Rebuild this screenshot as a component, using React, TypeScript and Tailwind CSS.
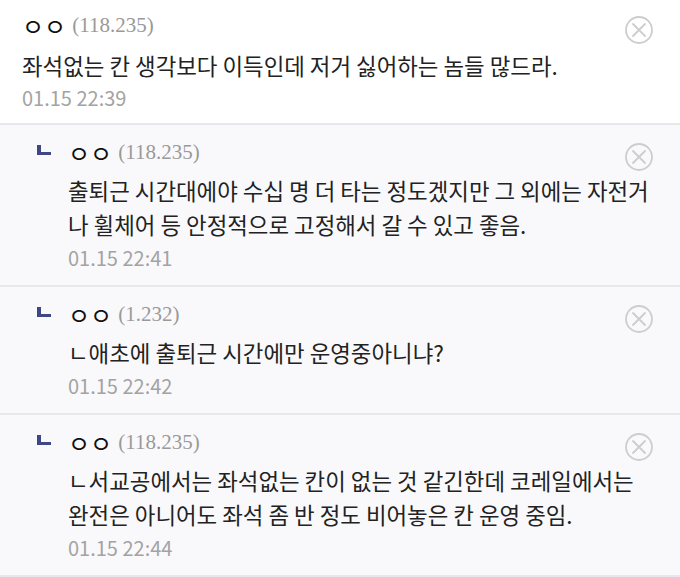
import React from "react"

type Comment = {
  ip: string
  lines: string
  time: string
  reply?: boolean
}

const comments: Comment[] = [
  {
    ip: "(118.235)",
    lines: "좌석없는 칸 생각보다 이득인데 저거 싫어하는 놈들 많드라.",
    time: "01.15 22:39",
  },
  {
    ip: "(118.235)",
    lines: "출퇴근 시간대에야 수십 명 더 타는 정도겠지만 그 외에는 자전거나 휠체어 등 안정적으로 고정해서 갈 수 있고 좋음.",
    time: "01.15 22:41",
    reply: true,
  },
  {
    ip: "(1.232)",
    lines: "ㄴ애초에 출퇴근 시간에만 운영중아니냐?",
    time: "01.15 22:42",
    reply: true,
  },
  {
    ip: "(118.235)",
    lines: "ㄴ서교공에서는 좌석없는 칸이 없는 것 같긴한데 코레일에서는 완전은 아니어도 좌석 좀 반 정도 비어놓은 칸 운영 중임.",
    time: "01.15 22:44",
    reply: true,
  },
]

const kr = { fontFamily: '"Noto Sans CJK KR", "Noto Sans", sans-serif' }

function DeleteIcon() {
  return (
    <svg width="28" height="28" viewBox="0 0 28 28" fill="none" stroke="#cdcdcd" strokeWidth="1.8">
      <circle cx="14" cy="14" r="13" />
      <path d="M8 8 L20 20 M20 8 L8 20" strokeLinecap="round" />
    </svg>
  )
}

function CommentRow({ c }: { c: Comment }) {
  return (
    <div
      className={
        c.reply
          ? "flex border-b-2 border-[#e7e7ec] bg-[#f9f9fb] pt-[13px] pb-[11px] pl-[37px] pr-[27px]"
          : "flex border-b-2 border-[#e7e7ec] bg-white pt-[11px] pb-[9px] pl-[22px] pr-[27px]"
      }
    >
      {c.reply && (
        <div className="mt-[7px] mr-[17px] h-[10px] w-[14px] shrink-0 border-b-[3px] border-l-[4px] border-[#3f4787]" />
      )}
      <div className="min-w-0 flex-1">
        <div className="flex h-[30px] items-start justify-between">
          <div className="flex h-[30px] items-center gap-[6px]">
            <span className="text-[24px] leading-[30px] text-[#111]" style={kr}>ㅇㅇ</span>
            <span className="text-[21px] text-[#999]" style={{ fontFamily: '"Liberation Serif", serif' }}>
              {c.ip}
            </span>
          </div>
          <div className={c.reply ? "mt-[5px]" : "mt-[5px]"}>
            <DeleteIcon />
          </div>
        </div>
        <p
          className={
            c.reply
              ? "mt-[5px] mr-[-1px] text-[22.4px] leading-[34px] text-[#222]"
              : "mt-[7px] mr-[-1px] text-[22.4px] leading-[34px] text-[#222]"
          }
          style={kr}
        >
          {c.lines}
        </p>
        <div className={c.reply ? "mt-[1px] text-[20px] leading-[32px] text-[#a3a3a3]" : "text-[20px] leading-[32px] text-[#a3a3a3]"} style={kr}>
          {c.time}
        </div>
      </div>
    </div>
  )
}

export default function App() {
  return (
    <div className="h-[577px] w-[680px] overflow-hidden bg-white">
      {comments.map((c, i) => (
        <CommentRow key={i} c={c} />
      ))}
    </div>
  )
}
